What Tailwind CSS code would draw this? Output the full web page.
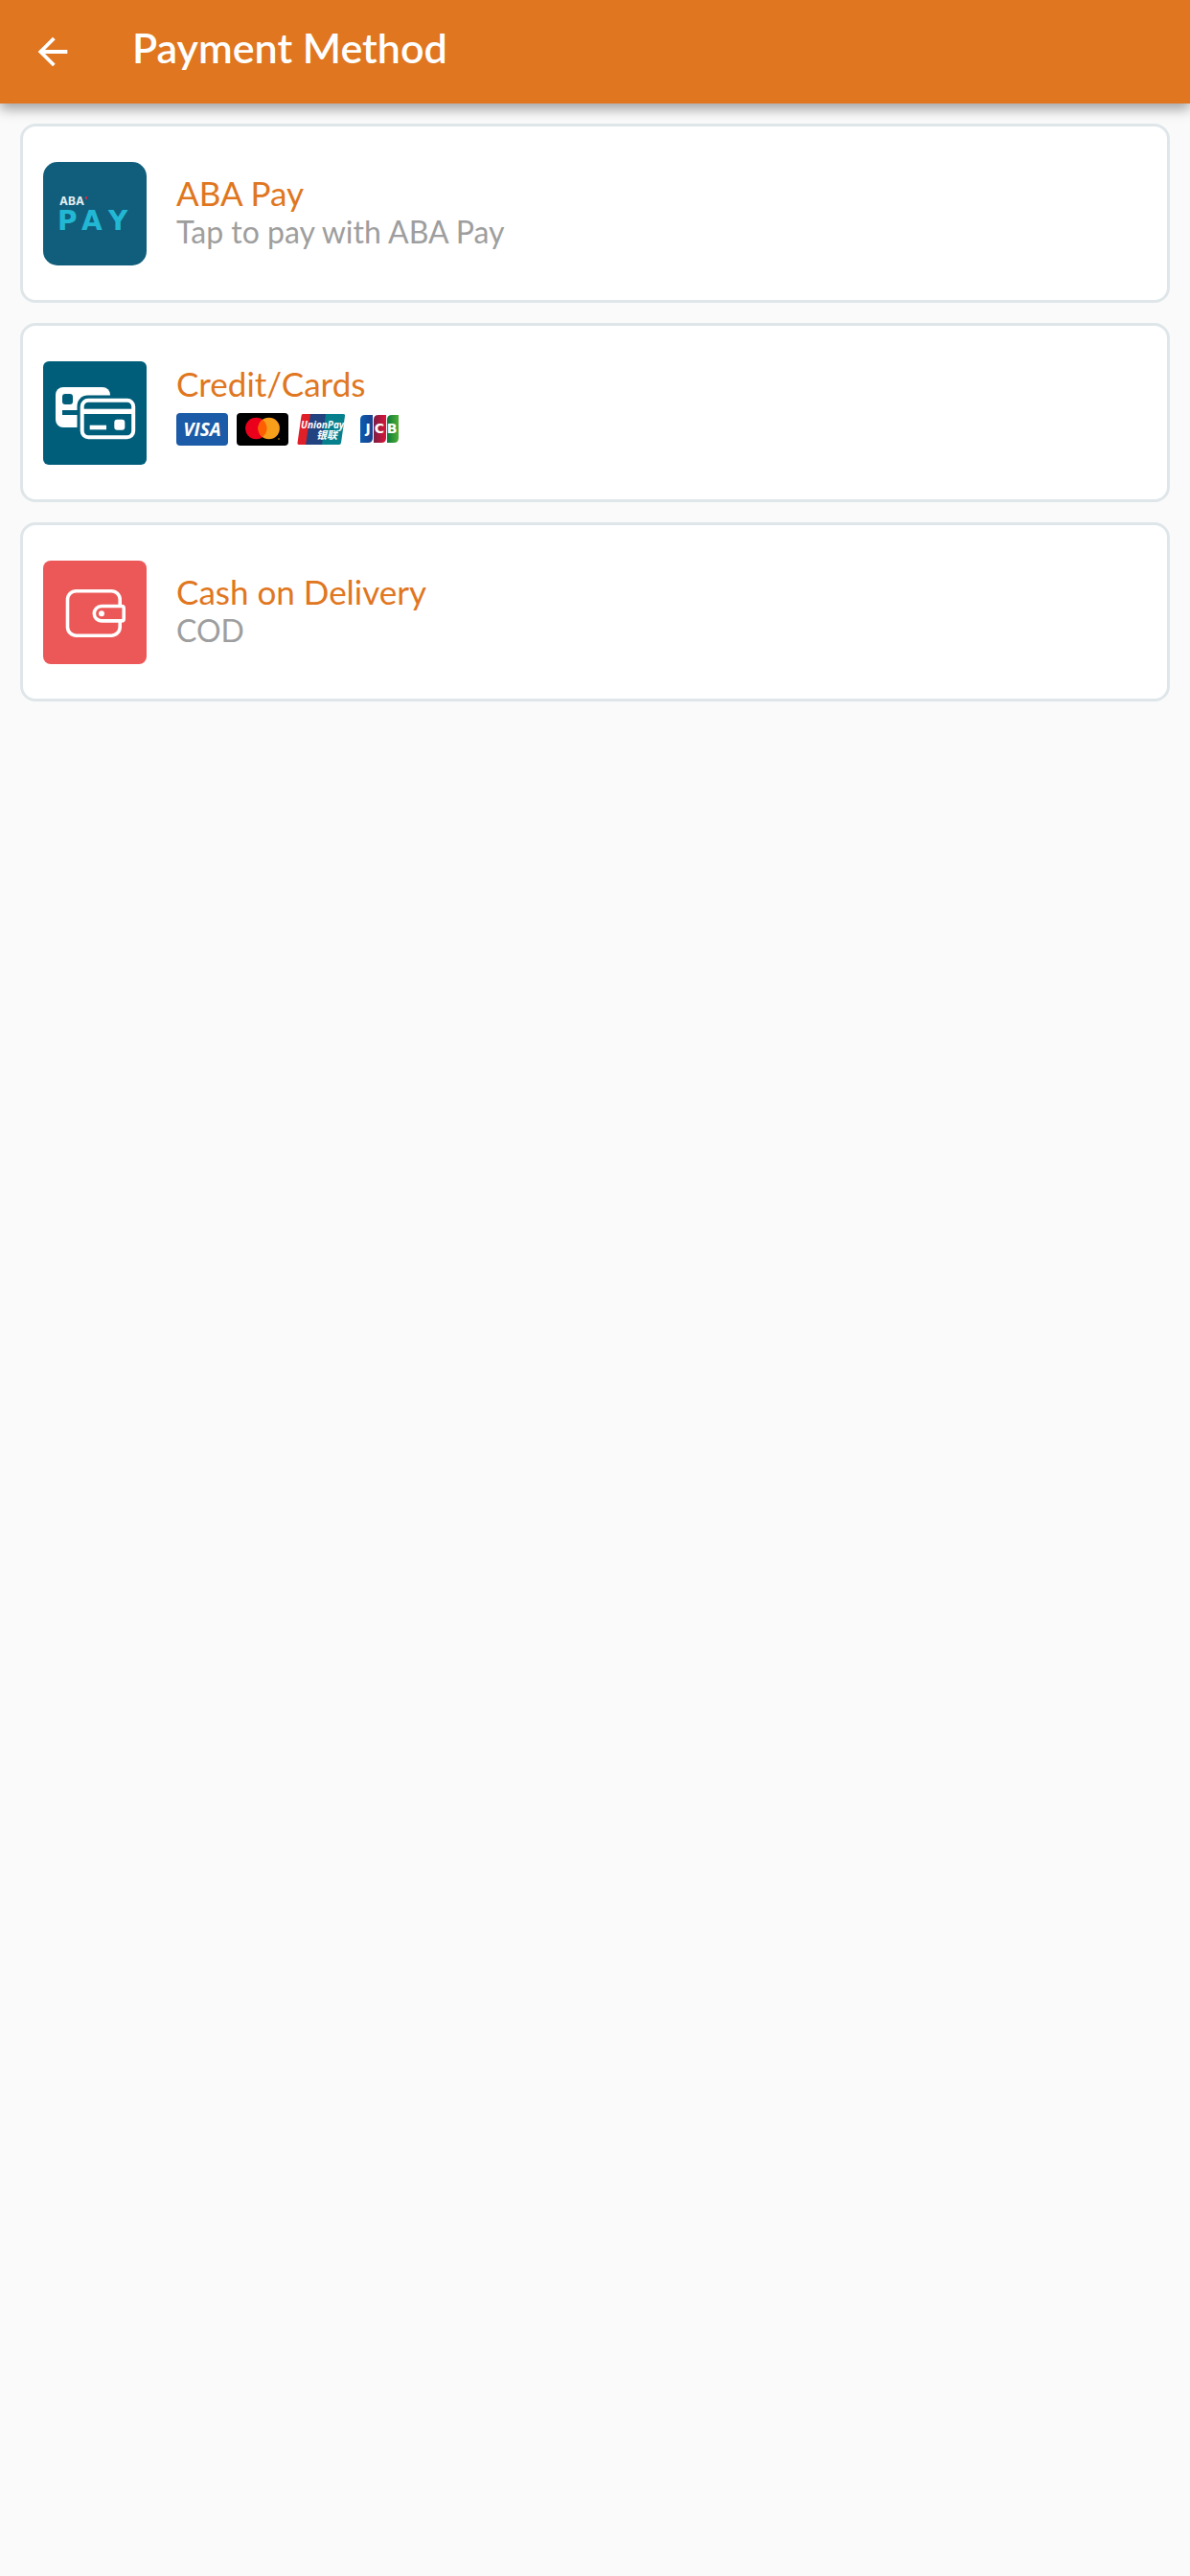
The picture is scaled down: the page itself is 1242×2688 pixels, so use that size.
<!DOCTYPE html>
<html lang="en">

<head>
  <meta charset="UTF-8">
  <meta name="viewport" content="width=device-width, initial-scale=1.0">
  <script src="https://cdn.jsdelivr.net/npm/@tailwindcss/browser@4"></script>
  <title>Payment Method</title>
</head>

<body class="bg-[#fafafa] min-h-screen font-['Lato',sans-serif]">
  <header class="bg-[#e07620] h-[108px] flex items-center px-8 shadow-[0_6px_12px_rgba(0,0,0,0.35)]">
    <a href="#" aria-label="Back" class="block">
      <svg class="w-[46px] h-[46px]" viewBox="0 0 24 24" fill="#fff">
        <path d="M20 11H7.83l5.59-5.59L12 4l-8 8 8 8 1.41-1.41L7.83 13H20v-2z" />
      </svg>
    </a>
    <h1 class="ml-15 pb-2 text-[43px] leading-[52px] font-semibold text-white">Payment Method</h1>
  </header>

  <main class="p-[21px] flex flex-col gap-[21px]">
    <!-- ABA Pay -->
    <button type="button" class="w-full h-[187px] px-[21px] flex items-center gap-[31px] text-left bg-white border-3 border-[#dfe6e9] rounded-2xl cursor-pointer">
      <svg class="w-[108px] h-[108px] shrink-0" viewBox="0 0 108 108">
        <rect width="108" height="108" rx="15" fill="#115e7c" />
        <text x="17" y="45" font-family="Inter, sans-serif" font-weight="700" font-size="12" fill="#e4eef2">ABA</text>
        <path d="M45 36v3" stroke="#c4304a" stroke-width="2" />
        <g font-family="DejaVu Sans, sans-serif" font-weight="700" font-size="28" fill="#22b8d4">
          <text x="15" y="71">P</text>
          <text x="40" y="71">A</text>
          <text x="68" y="71">Y</text>
        </g>
      </svg>
      <span class="flex flex-col pb-1">
        <span class="text-[35px] leading-[42px] text-[#e07620]">ABA Pay</span>
        <span class="text-[32px] leading-[40px] text-[#9e9e9e]">Tap to pay with ABA Pay</span>
      </span>
    </button>

    <!-- Credit cards -->
    <button type="button" class="w-full h-[187px] px-[21px] flex items-center gap-[31px] text-left bg-white border-3 border-[#dfe6e9] rounded-2xl cursor-pointer">
      <svg class="w-[108px] h-[108px] shrink-0" viewBox="0 0 108 108">
        <rect width="108" height="108" rx="6" fill="#005e7b" />
        <rect x="13" y="27" width="57" height="42" rx="8" fill="#fff" />
        <rect x="20" y="34" width="11" height="11" rx="3" fill="#005e7b" />
        <rect x="20" y="51" width="17" height="5" fill="#005e7b" />
        <rect x="35.500" y="35.500" width="64" height="49" rx="11" fill="#005e7b" />
        <rect x="40.700" y="40.700" width="53.500" height="38.500" rx="6.500" fill="none" stroke="#fff" stroke-width="4" />
        <rect x="41" y="49.700" width="53" height="5.300" fill="#fff" />
        <rect x="48.700" y="66.700" width="17.300" height="4.600" fill="#fff" />
        <rect x="74.300" y="60.700" width="11" height="11" rx="3" fill="#fff" />
      </svg>
      <span class="flex flex-col pb-[18px]">
        <span class="text-[35px] leading-[42px] text-[#e07620]">Credit/Cards</span>
        <span class="mt-[10px] flex gap-[9px]">
          <svg class="w-[54px] h-[34px]" viewBox="0 0 54 34">
            <rect width="54" height="34" rx="4" fill="#1b5ba7" />
            <text x="27" y="24" text-anchor="middle" font-family="Open Sans, sans-serif" font-weight="700" font-style="italic" font-size="19" fill="#fff">VISA</text>
          </svg>
          <svg class="w-[54px] h-[34px]" viewBox="0 0 54 34">
            <rect width="54" height="34" rx="4" fill="#000" />
            <circle cx="20.300" cy="16" r="11.200" fill="#eb001b" />
            <circle cx="33.700" cy="16" r="11.200" fill="#f79e1b" />
            <path d="M27 7a11.200 11.200 0 0 1 0 18a11.200 11.200 0 0 1 0-18z" fill="#ff5f00" />
            <circle cx="44" cy="27" r="0.800" fill="#f79e1b" />
          </svg>
          <svg class="w-[54px] h-[34px]" viewBox="0 0 54 34">
            <path d="M6 1h11l-6 32H2q-2 0-1.500-2L4.500 3q.3-2 1.500-2z" fill="#df2029" />
            <path d="M14 1h20l-6 32H9z" fill="#22437f" />
            <path d="M30 1h18q2.500 0 2 2l-4 28q-.5 2-2 2H26z" fill="#07808d" />
            <text x="4" y="16" font-family="Open Sans, sans-serif" font-weight="700" font-style="italic" font-size="10" fill="#fff">UnionPay</text>
            <text x="20" y="27" font-family="Noto Sans CJK SC, sans-serif" font-weight="700" font-style="italic" font-size="11" fill="#fff">银联</text>
          </svg>
          <svg class="w-[54px] h-[34px]" viewBox="0 0 54 34">
            <defs>
              <linearGradient id="jcbBlue">
                <stop offset="0" stop-color="#0a5cb0" />
                <stop offset="1" stop-color="#1b3f8b" />
              </linearGradient>
              <linearGradient id="jcbRed">
                <stop offset="0" stop-color="#7a1f45" />
                <stop offset="1" stop-color="#de1238" />
              </linearGradient>
              <linearGradient id="jcbGreen">
                <stop offset="0" stop-color="#0b7a3a" />
                <stop offset="1" stop-color="#4fae35" />
              </linearGradient>
            </defs>
            <path d="M3 7q0-5 5-5h8v24q0 5-5 5H3z" fill="url(#jcbBlue)" />
            <path d="M17 7q0-5 5-5h8v24q0 5-5 5h-8z" fill="url(#jcbRed)" />
            <path d="M31 7q0-5 5-5h7v24q0 5-5 5h-7z" fill="url(#jcbGreen)" />
            <g font-family="DejaVu Sans, sans-serif" font-weight="700" font-size="14" fill="#fff" text-anchor="middle">
              <text x="11" y="21">J</text>
              <text x="23" y="21">C</text>
              <text x="36" y="21">B</text>
            </g>
          </svg>
        </span>
      </span>
    </button>

    <!-- Cash on delivery -->
    <button type="button" class="w-full h-[187px] px-[21px] flex items-center gap-[31px] text-left bg-white border-3 border-[#dfe6e9] rounded-2xl cursor-pointer">
      <svg class="w-[108px] h-[108px] shrink-0" viewBox="0 0 108 108">
        <rect width="108" height="108" rx="8" fill="#ec5858" />
        <g stroke="#fff" stroke-width="3.600">
          <rect x="25.500" y="31.700" width="54.700" height="46.500" rx="9" fill="none" />
          <path d="M61 47.500h21q2.200 0 2.200 2.200v11q0 2.200-2.200 2.200H61a7.700 7.700 0 0 1 0-15.400z" fill="#ec5858" />
        </g>
        <circle cx="61" cy="55.200" r="3" fill="#fff" />
      </svg>
      <span class="flex flex-col pb-1">
        <span class="text-[35px] leading-[42px] text-[#e07620]">Cash on Delivery</span>
        <span class="text-[32px] leading-[40px] text-[#9e9e9e]">COD</span>
      </span>
    </button>
  </main>
</body>

</html>
